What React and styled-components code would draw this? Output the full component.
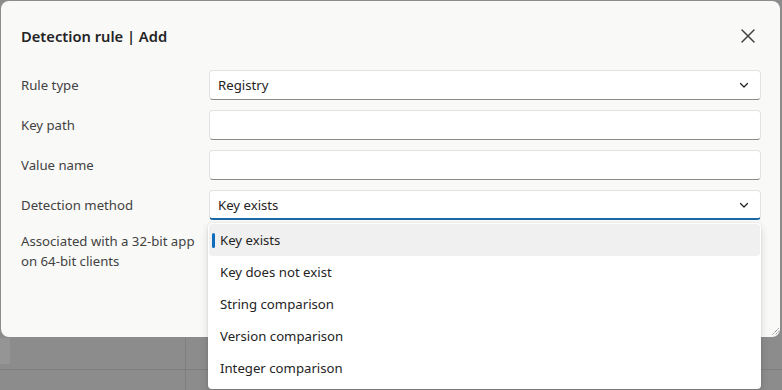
import React from "react";
import styled, { createGlobalStyle } from "styled-components";

const Global = createGlobalStyle`
  html, body { margin: 0; padding: 0; }
  body {
    width: 782px; height: 390px; overflow: hidden;
    background: #8b8b8b;
    font-family: "Segoe UI", "Noto Sans", "Open Sans", sans-serif;
    color: #242424;
  }
`;

const Stage = styled.div`
  position: relative;
  width: 782px;
  height: 390px;
  overflow: hidden;
  padding: 1px 0 0 1px;
  box-sizing: border-box;
`;

const Backdrop = styled.div`
  position: absolute;
  inset: 0;
  background: #8c8c8c;
  z-index: 0;
`;

const BgLine = styled.div`
  position: absolute;
  background: #7e7e7e;
  left: ${(p) => p.$x}px;
  top: ${(p) => p.$y}px;
  width: ${(p) => p.$w}px;
  height: ${(p) => p.$h}px;
`;

const BgBlock = styled.div`
  position: absolute;
  left: 0;
  top: 338px;
  width: 10px;
  height: 26px;
  background: #959595;
`;

const Dialog = styled.div`
  position: relative;
  z-index: 1;
  width: 779px;
  height: 336px;
  box-sizing: border-box;
  background: #f9f9f8;
  border-radius: 8px;
  padding: 20px 19px 0 20px;
  display: flex;
  flex-direction: column;
`;

const Header = styled.div`
  display: flex;
  align-items: center;
  justify-content: space-between;
  height: 30px;
  margin-bottom: 19px;
`;

const Title = styled.h2`
  margin: 0;
  font-size: 14.7px;
  font-weight: 600;
  color: #242424;
`;

const CloseButton = styled.button`
  border: none;
  background: transparent;
  padding: 0;
  width: 20px;
  height: 20px;
  display: flex;
  align-items: center;
  justify-content: center;
  margin-right: 3px;
  color: #424242;
`;

const Form = styled.div`
  display: grid;
  grid-template-columns: 188px 1fr;
  row-gap: 10px;
  align-items: center;
`;

const Label = styled.div`
  font-size: 13.2px;
  line-height: 20px;
  color: #424242;
  align-self: ${(p) => (p.$top ? "start" : "center")};
  margin-top: ${(p) => (p.$top ? "1px" : "0")};
`;

const Field = styled.div`
  height: 30px;
  box-sizing: border-box;
  background: #ffffff;
  border: 1px solid #e3e3e3;
  border-bottom: ${(p) => (p.$focused ? "2px solid #1b6aa6" : "1px solid #8a8a8a")};
  border-radius: 4px;
  display: flex;
  align-items: center;
  justify-content: space-between;
  padding: 0 10px 0 8px;
  font-size: 13.2px;
  color: #242424;
`;

const Spacer = styled.div`
  height: 40px;
`;

const Menu = styled.div`
  position: absolute;
  z-index: 2;
  left: 208px;
  top: 223px;
  width: 553px;
  background: #ffffff;
  border-radius: 4px;
  box-shadow: 0 0 2px rgba(0,0,0,0.12), 0 4px 8px rgba(0,0,0,0.14);
  padding: 1px 1px 5px 1px;
  box-sizing: border-box;
`;

const Option = styled.div`
  position: relative;
  height: 32px;
  display: flex;
  align-items: center;
  padding-left: 11px;
  font-size: 13.2px;
  color: #242424;
  background: ${(p) => (p.$active ? "#f0f0f0" : "transparent")};
  border-radius: 4px;
`;

const Indicator = styled.span`
  position: absolute;
  left: 3px;
  top: 9px;
  width: 3px;
  height: 15px;
  border-radius: 2px;
  background: #0f6cbd;
`;

const Grip = styled.svg`
  position: absolute;
  z-index: 1;
  left: 772px;
  top: 328px;
`;

const Chevron = () => (
  <svg width="12" height="12" viewBox="0 0 12 12">
    <path d="M2.5 4.5 L6 8 L9.5 4.5" fill="none" stroke="#242424" strokeWidth="1.3" strokeLinecap="round" strokeLinejoin="round" />
  </svg>
);

const options = [
  "Key exists",
  "Key does not exist",
  "String comparison",
  "Version comparison",
  "Integer comparison",
];

export default function App() {
  return (
    <>
      <Global />
      <Stage>
        <Backdrop>
          <BgBlock />
          <BgLine $x={0} $y={369} $w={782} $h={1} />
          <BgLine $x={185} $y={338} $w={1} $h={52} />
        </Backdrop>
        <Dialog>
          <Header>
            <Title>Detection rule | Add</Title>
            <CloseButton aria-label="Close">
              <svg width="16" height="16" viewBox="0 0 16 16">
                <path d="M2 2 L14 14 M14 2 L2 14" stroke="#424242" strokeWidth="1.5" strokeLinecap="round" />
              </svg>
            </CloseButton>
          </Header>
          <Form>
            <Label>Rule type</Label>
            <Field>
              <span>Registry</span>
              <Chevron />
            </Field>
            <Label>Key path</Label>
            <Field />
            <Label>Value name</Label>
            <Field />
            <Label>Detection method</Label>
            <Field $focused>
              <span>Key exists</span>
              <Chevron />
            </Field>
            <Label $top>
              Associated with a 32-bit app
              <br />
              on 64-bit clients
            </Label>
            <Spacer />
          </Form>
        </Dialog>
        <Grip width="7" height="7" viewBox="0 0 7 7">
          <path d="M6.5 0.5 L0.5 6.5 M6.5 3.5 L3.5 6.5" stroke="#555" strokeWidth="1" strokeDasharray="1 1" />
        </Grip>
        <Menu>
          {options.map((o, i) => (
            <Option key={o} $active={i === 0}>
              {i === 0 && <Indicator />}
              {o}
            </Option>
          ))}
        </Menu>
      </Stage>
    </>
  );
}
